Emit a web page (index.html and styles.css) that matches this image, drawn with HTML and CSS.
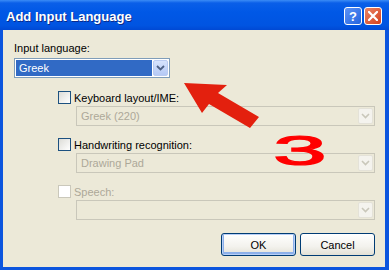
FILE: index.html
```html
<!DOCTYPE html>
<html>
<head>
    <title>Add Input Language</title>
    <link rel="stylesheet" href="styles.css">
</head>
<body>
    <div class="window">
        <div class="titlebar">
            <span class="title">Add Input Language</span>
            <div class="title-buttons">
                <span class="tbtn help">?</span>
                <span class="tbtn close">
                    <svg width="10" height="10" viewBox="0 0 10 10"><path d="M1 1 L9 9 M9 1 L1 9" stroke="#fff" stroke-width="2.2" stroke-linecap="square"/></svg>
                </span>
            </div>
        </div>
        <div class="content">
            <div class="label">Input language:</div>
            <div class="combo active">
                <span class="value selected">Greek</span>
                <span class="drop"><svg width="9" height="6" viewBox="0 0 9 6"><path d="M1 1 L4.5 4.5 L8 1" fill="none" stroke="#4d6185" stroke-width="1.8"/></svg></span>
            </div>

            <div class="group">
                <div class="check-row first"><span class="box"></span>Keyboard layout/IME:</div>
                <div class="combo disabled">
                    <span class="value">Greek (220)</span>
                    <span class="drop"><svg width="9" height="6" viewBox="0 0 9 6"><path d="M1 1 L4.5 4.5 L8 1" fill="none" stroke="#c9c7ba" stroke-width="1.6"/></svg></span>
                </div>

                <div class="check-row"><span class="box"></span>Handwriting recognition:</div>
                <div class="combo disabled">
                    <span class="value">Drawing Pad</span>
                    <span class="drop"><svg width="9" height="6" viewBox="0 0 9 6"><path d="M1 1 L4.5 4.5 L8 1" fill="none" stroke="#c9c7ba" stroke-width="1.6"/></svg></span>
                </div>

                <div class="check-row off"><span class="box"></span>Speech:</div>
                <div class="combo disabled">
                    <span class="value"></span>
                    <span class="drop"><svg width="9" height="6" viewBox="0 0 9 6"><path d="M1 1 L4.5 4.5 L8 1" fill="none" stroke="#c9c7ba" stroke-width="1.6"/></svg></span>
                </div>
            </div>

            <div class="buttons">
                <button class="btn default">OK</button>
                <button class="btn">Cancel</button>
            </div>
        </div>

        <!-- annotation drawn over the dialog -->
        <svg class="marks" width="389" height="270" viewBox="0 0 389 270">
            <polygon points="184,83 227,85 218,93 259,117 250,128 209,104 202,113" fill="#e3200e"/>
            <text transform="translate(273,165) scale(2.3,1)" font-family="Liberation Sans, Arial, sans-serif" font-size="42" fill="#f00" stroke="#f00" stroke-width="1.2">3</text>
        </svg>
    </div>
</body>
</html>
```

FILE: styles.css
```css
body {
    margin: 0;
    font-family: "Liberation Sans", Arial, sans-serif;
    font-size: 11px;
}
.window {
    position: relative;
    width: 389px;
    height: 270px;
    background-color: #ece9d8;
    display: flex;
    flex-direction: column;
    overflow: hidden;
}
.titlebar {
    height: 30px;
    display: flex;
    align-items: center;
    justify-content: space-between;
    padding: 0 7px 0 6px;
    background: linear-gradient(#3b8cf6 0, #0a5fe8 3px, #0058e6 40%, #0054e1 85%, #0049d4 100%);
    box-sizing: border-box;
}
.title {
    color: #fff;
    font-weight: bold;
    font-size: 13px;
    text-shadow: 1px 1px 0 #0a2a8a;
    padding-top: 2px;
}
.title-buttons {
    display: flex;
    gap: 2px;
    padding-top: 2px;
}
.tbtn {
    width: 18px;
    height: 18px;
    border: 1px solid #fff;
    border-radius: 3px;
    box-sizing: border-box;
    display: flex;
    align-items: center;
    justify-content: center;
    color: #fff;
    font-weight: bold;
    font-size: 13px;
}
.help {
    background: linear-gradient(135deg, #5d93f6, #2463de);
}
.close {
    background: linear-gradient(135deg, #e98566, #d5401c);
}
.content {
    flex: 1;
    border-left: 3px solid #0b55de;
    border-right: 4px solid #0b55de;
    border-bottom: 3px solid #0b55de;
    padding: 11px 10px 0 11px;
    display: flex;
    flex-direction: column;
}
.label {
    height: 14px;
    line-height: 14px;
    color: #000;
}
.combo {
    height: 20px;
    box-sizing: border-box;
    display: flex;
    align-items: stretch;
    padding: 1px;
    border: 1px solid #7f9db9;
    background: #fff;
}
.combo .value {
    flex: 1;
    padding-left: 3px;
    line-height: 16px;
}
.combo .drop {
    width: 15px;
    margin-left: 1px;
    display: flex;
    align-items: center;
    justify-content: center;
    border-radius: 2px;
}
.combo.active {
    width: 156px;
    margin-top: 3px;
}
.combo.active .value.selected {
    background: #316ac5;
    color: #fff;
}
.combo.active .drop {
    background: linear-gradient(#d6e3fd, #b5c9f5);
    border: 1px solid #b9cbf2;
    box-sizing: border-box;
}
.group {
    padding-left: 44px;
    display: flex;
    flex-direction: column;
}
.check-row {
    height: 13px;
    margin-top: 12px;
    display: flex;
    align-items: center;
    gap: 3px;
    color: #000;
}
.check-row.first {
    margin-top: 13px;
}
.check-row .box {
    width: 13px;
    height: 13px;
    box-sizing: border-box;
    border: 1px solid #1c5180;
    background: linear-gradient(135deg, #dcdcd7, #fff);
}
.check-row.off {
    color: #aca899;
}
.check-row.off .box {
    border-color: #cac8bb;
    background: #fff;
}
.group .combo.disabled {
    margin-left: 18px;
    margin-top: 2px;
}
.combo.disabled {
    border-color: #c9c7ba;
    background: #ece9d8;
    color: #aca899;
}
.combo.disabled .drop {
    background: #f4f3ee;
    border: 1px solid #e4e2d8;
    box-sizing: border-box;
}
.buttons {
    display: flex;
    justify-content: flex-end;
    gap: 4px;
    margin-top: 13px;
}
.btn {
    width: 75px;
    height: 23px;
    border: 1px solid #003c74;
    border-radius: 3px;
    background: linear-gradient(#fff, #f3f2ed 60%, #e3e1d6);
    font-family: "Liberation Sans", Arial, sans-serif;
    font-size: 11px;
    color: #000;
    padding: 0;
}
.btn.default {
    box-shadow: inset 0 0 0 1px #b8cff7, inset 0 -1px 0 2px #8cb0ea;
}
.marks {
    position: absolute;
    left: 0;
    top: 0;
    pointer-events: none;
}
```
